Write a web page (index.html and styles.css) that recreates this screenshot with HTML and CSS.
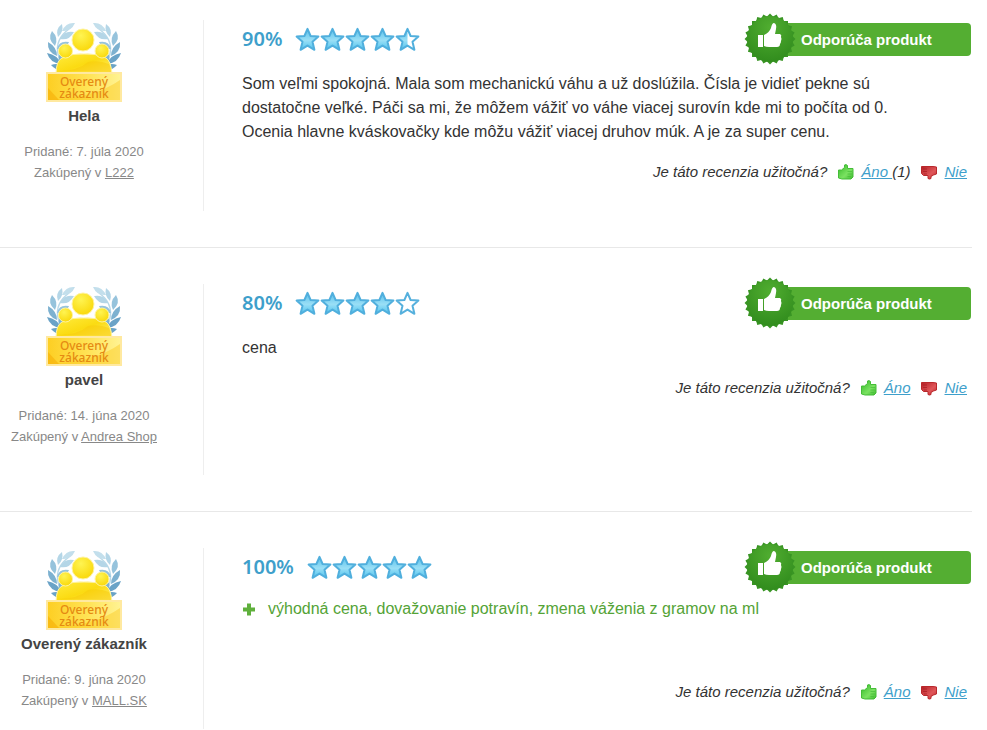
FILE: index.html
```html
<!DOCTYPE html>
<html lang="sk">
<head>
    <meta charset="UTF-8">
    <meta name="viewport" content="width=device-width, initial-scale=1.0">
    <title>Recenzie produktu</title>
    <link rel="stylesheet" href="styles.css">
</head>
<body>
    <!-- Shared icons -->
    <svg class="sprite" aria-hidden="true">
        <defs>
            <linearGradient id="star-fill" x1="0" y1="0" x2="0" y2="1">
                <stop offset="0" stop-color="#58c0ea"/>
                <stop offset="0.55" stop-color="#9adff6"/>
                <stop offset="1" stop-color="#4fc3ee"/>
            </linearGradient>
            <linearGradient id="gold" x1="0" y1="0" x2="1" y2="1">
                <stop offset="0" stop-color="#ffec3d"/>
                <stop offset="0.5" stop-color="#fbdb12"/>
                <stop offset="1" stop-color="#fff07a"/>
            </linearGradient>
            <linearGradient id="plate" x1="0" y1="0" x2="1" y2="0">
                <stop offset="0" stop-color="#fdce22"/>
                <stop offset="0.55" stop-color="#ffe355"/>
                <stop offset="1" stop-color="#fff394"/>
            </linearGradient>
            <radialGradient id="head" cx="0.4" cy="0.3" r="0.75">
                <stop offset="0" stop-color="#fff452"/>
                <stop offset="1" stop-color="#f9d707"/>
            </radialGradient>
            <radialGradient id="seal-light" cx="0.5" cy="0.25" r="0.8">
                <stop offset="0" stop-color="#50ad30"/>
                <stop offset="1" stop-color="#2f8a1c"/>
            </radialGradient>
            <linearGradient id="thumb-green" x1="0" y1="0" x2="1" y2="1">
                <stop offset="0" stop-color="#34b927"/>
                <stop offset="0.6" stop-color="#7be262"/>
                <stop offset="1" stop-color="#3fbb30"/>
            </linearGradient>
            <linearGradient id="thumb-red" x1="0" y1="0" x2="1" y2="1">
                <stop offset="0" stop-color="#b51f24"/>
                <stop offset="0.6" stop-color="#e0575a"/>
                <stop offset="1" stop-color="#bd2529"/>
            </linearGradient>
            <path id="star-shape" d="M12.5 1.8 L15.6 9 L23.4 9.6 L17.5 14.8 L19.4 22.8 L12.5 18.6 L5.6 22.8 L7.5 14.8 L1.6 9.6 L9.4 9 Z"/>
            <rect id="teeth" x="-18" y="-18" width="36" height="36"/>
            <g id="laurel">
                <path d="M24 7 Q10 17 13 32 Q15 42 23 47" fill="none" stroke="#b9d9e8" stroke-width="1.500"/>
                <path d="M30 1 Q21 0 17 9 Q26 10 30 1 Z" fill="#c3dfec"/>
                <path d="M17 2 Q10 7 13 15 Q19 10 17 2 Z" fill="#b4d6e7"/>
                <path d="M29 10 Q19 8 15 17 Q24 19 29 10 Z" fill="#b4d6e7"/>
                <path d="M7 9 Q2 17 10 24 Q14 16 7 9 Z" fill="#96c3dc"/>
                <path d="M24 20 Q14 18 12 27 Q21 28 24 20 Z" fill="#96c3dc"/>
                <path d="M3 20 Q2 30 12 34 Q12 25 3 20 Z" fill="#7db1d0"/>
                <path d="M21 29 Q12 31 14 39 Q22 38 21 29 Z" fill="#7db1d0"/>
                <path d="M2 31 Q5 41 16 42 Q13 33 2 31 Z" fill="#6aa3c7"/>
                <path d="M6 43 Q12 50 21 47 Q15 40 6 43 Z" fill="#6aa3c7"/>
            </g>
        </defs>

        <symbol id="star-full" viewBox="0 0 25 25">
            <use href="#star-shape" fill="url(#star-fill)" stroke="#50afdd" stroke-width="2" stroke-linejoin="round"/>
        </symbol>
        <symbol id="star-empty" viewBox="0 0 25 25">
            <use href="#star-shape" fill="#fff" stroke="#55b0dd" stroke-width="2" stroke-linejoin="round"/>
        </symbol>
        <symbol id="star-half" viewBox="0 0 25 25">
            <use href="#star-shape" fill="#fff"/>
            <path d="M12.5 1.8 L9.4 9 L1.6 9.6 L7.5 14.8 L5.6 22.8 L12.5 18.6 Z" fill="url(#star-fill)"/>
            <use href="#star-shape" fill="none" stroke="#50afdd" stroke-width="2" stroke-linejoin="round"/>
        </symbol>

        <symbol id="verified" viewBox="0 0 78 82">
            <use href="#laurel"/>
            <use href="#laurel" transform="matrix(-1 0 0 1 78 0)"/>
            <g stroke="#fff3a0" stroke-width="1">
                <path d="M11 52 Q11 39 17 36 Q28 31 39 32 Q50 31 61 36 Q66 39 67 52 Z" fill="url(#gold)"/>
                <circle cx="20.500" cy="29" r="7" fill="url(#head)"/>
                <circle cx="57" cy="29" r="7" fill="url(#head)"/>
                <circle cx="38" cy="18" r="11" fill="url(#head)"/>
            </g>
            <path d="M12 49 Q33 49 43 40 Q54 38 64 42 Q66 46 66 50 Z" fill="#f8cb0b" opacity="0.55"/>
            <rect x="2" y="51" width="74" height="28" fill="url(#plate)" stroke="#ffe9a0" stroke-width="2"/>
            <path d="M3 78 Q50 76 75 58 L75 78 Z" fill="#fbc81f" opacity="0.45"/>
            <path d="M3 78 V66 L14 78 Z" fill="#f5a800" opacity="0.5"/>
        </symbol>

        <symbol id="seal" viewBox="-27 -27 54 54">
            <g fill="#399524">
                <use href="#teeth"/>
                <use href="#teeth" transform="rotate(15)"/>
                <use href="#teeth" transform="rotate(30)"/>
                <use href="#teeth" transform="rotate(45)"/>
                <use href="#teeth" transform="rotate(60)"/>
                <use href="#teeth" transform="rotate(75)"/>
            </g>
            <circle r="23" fill="url(#seal-light)"/>
            <g fill="#fff">
                <path d="M-12 -4 H-7 V8 H-12 Z"/>
                <path d="M-6 -4 Q-1 -6 1 -11 Q2 -16 4 -16 Q7 -15 6 -10 L5 -5 H10 Q12 -4 11 -2 Q12 0 11 2 Q11 4 10 5 Q10 8 7 8 H-1 Q-4 8 -6 7 Z"/>
            </g>
        </symbol>

        <symbol id="thumb-up" viewBox="0 0 16 16">
            <path d="M0.500 6 H3.500 L6.500 3.500 V1 Q8 0 9.500 1.500 V4.500 H15 V13 L13 15 H4 L0.500 14 Z" fill="url(#thumb-green)" stroke="#45bd38" stroke-width="1"/>
            <path d="M9.500 7.500 H14 M9.500 10 H14 M9.500 12.500 H13" fill="none" stroke="#45bd38" stroke-width="0.700"/>
        </symbol>
        <symbol id="thumb-down" viewBox="0 0 16 16">
            <path d="M0.500 2.500 H12 L15.500 3 V10 L12.500 11 L10 12.500 V14.500 Q8.500 15.500 7 14.500 V11.500 H2.500 L0.500 9.500 Z" fill="url(#thumb-red)" stroke="#b9282c" stroke-width="1"/>
            <path d="M2 5 H6 M2 7.500 H6 M3 10 H6" fill="none" stroke="#a81c22" stroke-width="0.700"/>
        </symbol>
        <symbol id="plus" viewBox="0 0 13 13">
            <path d="M4.500 0.500 H8.500 V4.500 H12.500 V8.500 H8.500 V12.500 H4.500 V8.500 H0.500 V4.500 H4.500 Z" fill="#5fb03c"/>
        </symbol>
    </svg>

    <main class="reviews">
        <article class="review">
            <aside class="author">
                <div class="verified">
                    <svg><use href="#verified"/></svg>
                    <span class="verified-text">Overený<br>zákazník</span>
                </div>
                <strong class="name">Hela</strong>
                <p class="meta">Pridané: 7. júla 2020<br>Zakúpený v <a href="#">L222</a></p>
            </aside>
            <div class="content">
                <header class="review-head">
                    <span class="percent">90%</span>
                    <span class="stars">
                        <svg><use href="#star-full"/></svg>
                        <svg><use href="#star-full"/></svg>
                        <svg><use href="#star-full"/></svg>
                        <svg><use href="#star-full"/></svg>
                        <svg><use href="#star-half"/></svg>
                    </span>
                    <div class="recommend">
                        <svg class="seal"><use href="#seal"/></svg>
                        <span class="recommend-label">Odporúča produkt</span>
                    </div>
                </header>
                <p class="text">Som veľmi spokojná. Mala som mechanickú váhu a už doslúžila. Čísla je vidieť pekne sú dostatočne veľké. Páči sa mi, že môžem vážiť vo váhe viacej surovín kde mi to počíta od 0. Ocenia hlavne kváskovačky kde môžu vážiť viacej druhov múk. A je za super cenu.</p>
                <div class="useful">
                    <span>Je táto recenzia užitočná?</span>
                    <span class="vote"><svg><use href="#thumb-up"/></svg><span><a href="#">Áno&nbsp;</a>(1)</span></span>
                    <span class="vote"><svg><use href="#thumb-down"/></svg><a href="#">Nie</a></span>
                </div>
            </div>
        </article>

        <article class="review">
            <aside class="author">
                <div class="verified">
                    <svg><use href="#verified"/></svg>
                    <span class="verified-text">Overený<br>zákazník</span>
                </div>
                <strong class="name">pavel</strong>
                <p class="meta">Pridané: 14. júna 2020<br>Zakúpený v <a href="#">Andrea Shop</a></p>
            </aside>
            <div class="content">
                <header class="review-head">
                    <span class="percent">80%</span>
                    <span class="stars">
                        <svg><use href="#star-full"/></svg>
                        <svg><use href="#star-full"/></svg>
                        <svg><use href="#star-full"/></svg>
                        <svg><use href="#star-full"/></svg>
                        <svg><use href="#star-empty"/></svg>
                    </span>
                    <div class="recommend">
                        <svg class="seal"><use href="#seal"/></svg>
                        <span class="recommend-label">Odporúča produkt</span>
                    </div>
                </header>
                <p class="text">cena</p>
                <div class="useful">
                    <span>Je táto recenzia užitočná?</span>
                    <span class="vote"><svg><use href="#thumb-up"/></svg><a href="#">Áno</a></span>
                    <span class="vote"><svg><use href="#thumb-down"/></svg><a href="#">Nie</a></span>
                </div>
            </div>
        </article>

        <article class="review">
            <aside class="author">
                <div class="verified">
                    <svg><use href="#verified"/></svg>
                    <span class="verified-text">Overený<br>zákazník</span>
                </div>
                <strong class="name">Overený zákazník</strong>
                <p class="meta">Pridané: 9. júna 2020<br>Zakúpený v <a href="#">MALL.SK</a></p>
            </aside>
            <div class="content">
                <header class="review-head">
                    <span class="percent">100%</span>
                    <span class="stars">
                        <svg><use href="#star-full"/></svg>
                        <svg><use href="#star-full"/></svg>
                        <svg><use href="#star-full"/></svg>
                        <svg><use href="#star-full"/></svg>
                        <svg><use href="#star-full"/></svg>
                    </span>
                    <div class="recommend">
                        <svg class="seal"><use href="#seal"/></svg>
                        <span class="recommend-label">Odporúča produkt</span>
                    </div>
                </header>
                <ul class="pros">
                    <li><svg><use href="#plus"/></svg>výhodná cena, dovažovanie potravín, zmena váženia z gramov na ml</li>
                </ul>
                <div class="useful">
                    <span>Je táto recenzia užitočná?</span>
                    <span class="vote"><svg><use href="#thumb-up"/></svg><a href="#">Áno</a></span>
                    <span class="vote"><svg><use href="#thumb-down"/></svg><a href="#">Nie</a></span>
                </div>
            </div>
        </article>
    </main>
</body>
</html>
```
FILE: styles.css
```css
* {
    box-sizing: border-box;
}
body {
    margin: 0;
    background: #fff;
    color: #333;
    font-family: "Liberation Sans", Arial, sans-serif;
    font-size: 16px;
    line-height: 24px;
}
.sprite {
    display: block;
    width: 0;
    height: 0;
}
.reviews {
    margin-right: 15px;
}
.review {
    display: flex;
    padding: 36px 0;
    border-bottom: 1px solid #e8e8e8;
}
.review:first-child {
    padding-top: 20px;
}
.review:last-child {
    padding-bottom: 0;
    border-bottom: 0;
}

/* Author column */
.author {
    display: flex;
    flex-direction: column;
    align-items: center;
    flex: 0 0 204px;
    min-height: 191px;
    padding: 2px 35px 0 0;
    border-right: 1px solid #eee;
}
.review:last-child .author {
    min-height: 181px;
}
.verified {
    position: relative;
    width: 78px;
    height: 82px;
}
.verified svg {
    display: block;
    width: 78px;
    height: 82px;
}
.verified-text {
    position: absolute;
    left: 0;
    right: 0;
    bottom: 4px;
    color: #e58a12;
    font-family: "Noto Sans", sans-serif;
    font-size: 12px;
    font-weight: 500;
    line-height: 12px;
    text-align: center;
}
.name {
    color: #444;
    font-size: 15px;
}
.meta {
    margin: 13px 0 0;
    color: #888;
    font-size: 13px;
    line-height: 21px;
    text-align: center;
    white-space: nowrap;
}
.meta a {
    color: #888;
}

/* Review body */
.content {
    flex: 1;
    min-width: 0;
    padding-left: 38px;
}
.review-head {
    display: flex;
    align-items: center;
    height: 38px;
}
.percent {
    color: #3e9fcb;
    font-family: "Noto Sans", sans-serif;
    font-size: 20px;
    font-weight: 600;
}
.stars {
    display: flex;
    margin-left: 13px;
}
.stars svg {
    width: 25px;
    height: 25px;
}
.recommend {
    display: flex;
    align-items: center;
    width: 228px;
    height: 54px;
    margin: 0 1px 0 auto;
}
.seal {
    z-index: 1;
    flex: none;
    width: 54px;
    height: 54px;
}
.recommend-label {
    flex: 1;
    margin-left: -20px;
    padding-left: 24px;
    border-radius: 4px;
    background: #54ae32;
    color: #fff;
    font-size: 15px;
    font-weight: bold;
    line-height: 33px;
}
.text {
    max-width: 680px;
    margin: 14px 0 0;
}
.pros {
    margin: 11px 0 59px;
    padding: 0;
    color: #54a336;
    list-style: none;
}
.pros li {
    display: flex;
    align-items: center;
    gap: 12px;
}
.pros svg {
    width: 14px;
    height: 13px;
}

/* Helpful votes */
.useful {
    display: flex;
    justify-content: flex-end;
    gap: 11px;
    margin-top: 16px;
    padding-right: 5px;
    font-size: 15px;
    font-style: italic;
}
.useful a {
    color: #3e9fcb;
}
.vote {
    display: flex;
    align-items: center;
    gap: 7px;
}
.vote svg {
    width: 16px;
    height: 16px;
}
```
